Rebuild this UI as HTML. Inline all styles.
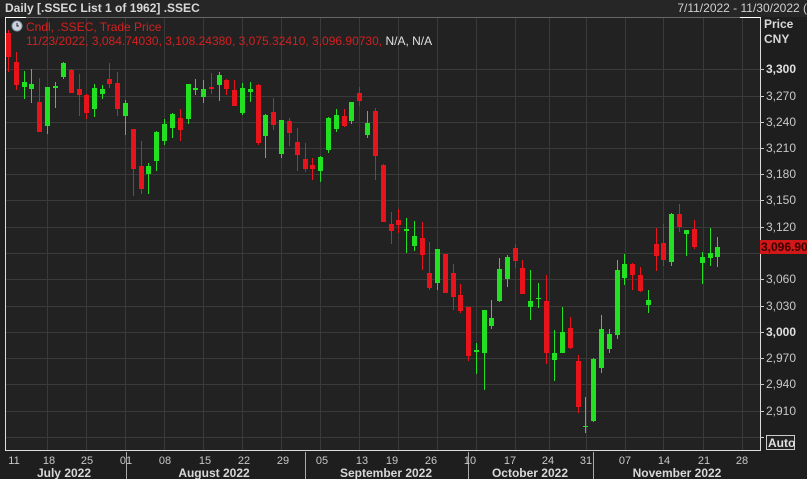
<!DOCTYPE html>
<html><head><meta charset="utf-8"><style>
html,body{margin:0;padding:0;background:#1e1e1e;width:807px;height:479px;overflow:hidden;font-family:"Liberation Sans",sans-serif}
svg{display:block}
text{font-family:"Liberation Sans",sans-serif}
</style></head><body>
<svg width="807" height="479" viewBox="0 0 807 479" xmlns="http://www.w3.org/2000/svg">
<rect x="0" y="0" width="807" height="479" fill="#1e1e1e"/>
<rect x="0" y="0" width="807" height="17" fill="#262626"/>
<rect x="5" y="17" width="755" height="433" fill="#222222"/>
<g stroke="#3a3a3a" stroke-width="1">
<path d="M5 69.5H760M5 96.5H760M5 122.5H760M5 148.5H760M5 174.5H760M5 200.5H760M5 227.5H760M5 253.5H760M5 279.5H760M5 306.5H760M5 332.5H760M5 358.5H760M5 384.5H760M5 411.5H760M5 437.5H760"/>
<path d="M47.5 17V450M86.5 17V450M125.5 17V450M164.5 17V450M203.5 17V450M242.5 17V450M281.5 17V450M320.5 17V450M359.5 17V450M398.5 17V450M437.5 17V450M476.5 17V450M515.5 17V450M549.5 17V450M586.5 17V450M625.5 17V450M663.5 17V450M703.5 17V450M742.5 17V450"/>
</g>
<path d="M5.5 17.5H760.5" fill="none" stroke="#666" stroke-width="1"/>
<path d="M5.5 17V450.5H760.5V17" fill="none" stroke="#ddd" stroke-width="1"/>
<path d="M5.5 17.5H26M740 17.5H760.5" fill="none" stroke="#fff" stroke-width="1"/>
<g stroke="#22e022" stroke-width="1" fill="#22e022">
<path fill="none" d="M24.5 71V99M31.5 69V103M47.5 87V134M55.5 82V108M63.5 62V79M94.5 84V117M102.5 85V99M125.5 100V135M148.5 163V194M156.5 131V171M164.5 119V145M172.5 113V138M188.5 84V124M195.5 79V95M203.5 80V103M219.5 72V101M242.5 83V115M250.5 82V102M265.5 114V158M281.5 120V158M320.5 156V182M328.5 117V153M336.5 109V132M351.5 102V124M367.5 111V138M406.5 218V253M414.5 221V251M437.5 249V290M476.5 343V374M484.5 310V390M491.5 300V329M499.5 258V302M507.5 255V287M530.5 270V320M538.5 283V308M554.5 330V381M562.5 307V352M585.5 397V433M593.5 358V422M601.5 315V373M609.5 329V353M617.5 260V339M624.5 254V285M648.5 290V313M671.5 213V266M686.5 230V256M702.5 252V284M710.5 228V266M717.5 237V267"/>
<g stroke="none">
<rect x="22" y="82" width="5" height="5"/><rect x="29" y="84" width="5" height="5"/><rect x="45" y="87" width="5" height="39"/><rect x="53" y="86" width="5" height="2"/><rect x="61" y="63" width="5" height="14"/><rect x="92" y="88" width="5" height="21"/><rect x="100" y="89" width="5" height="5"/><rect x="123" y="103" width="5" height="13"/><rect x="146" y="166" width="5" height="8"/><rect x="154" y="132" width="5" height="29"/><rect x="162" y="124" width="5" height="17"/><rect x="170" y="114" width="5" height="14"/><rect x="186" y="84" width="5" height="35"/><rect x="193" y="88" width="5" height="2"/><rect x="201" y="89" width="5" height="8"/><rect x="217" y="75" width="5" height="10"/><rect x="240" y="88" width="5" height="25"/><rect x="248" y="89" width="5" height="3"/><rect x="263" y="115" width="5" height="21"/><rect x="279" y="120" width="5" height="34"/><rect x="318" y="157" width="5" height="14"/><rect x="326" y="118" width="5" height="32"/><rect x="334" y="115" width="5" height="14"/><rect x="349" y="102" width="5" height="19"/><rect x="365" y="123" width="5" height="12"/><rect x="404" y="229" width="5" height="2"/><rect x="412" y="236" width="5" height="10"/><rect x="435" y="249" width="5" height="34"/><rect x="474" y="350" width="5" height="2"/><rect x="482" y="310" width="5" height="43"/><rect x="489" y="318" width="5" height="8"/><rect x="497" y="269" width="5" height="32"/><rect x="505" y="257" width="5" height="22"/><rect x="528" y="301" width="5" height="6"/><rect x="536" y="298" width="5" height="1"/><rect x="552" y="353" width="5" height="7"/><rect x="560" y="332" width="5" height="21"/><rect x="583" y="426" width="5" height="1"/><rect x="591" y="359" width="5" height="62"/><rect x="599" y="329" width="5" height="39"/><rect x="607" y="334" width="5" height="15"/><rect x="615" y="270" width="5" height="65"/><rect x="622" y="264" width="5" height="14"/><rect x="646" y="300" width="5" height="5"/><rect x="669" y="214" width="5" height="48"/><rect x="684" y="230" width="5" height="4"/><rect x="700" y="257" width="5" height="6"/><rect x="708" y="253" width="5" height="5"/><rect x="715" y="247" width="5" height="10"/>
</g></g>
<g stroke="#e8141b" stroke-width="1" fill="#e8141b">
<path fill="none" d="M8.5 30V72M16.5 52V90M39.5 78V132M71.5 69V93M79.5 74V116M86.5 94V119M109.5 63V88M117.5 72V116M133.5 129V196M141.5 141V194M180.5 109V141M211.5 73V94M226.5 79V95M234.5 80V106M258.5 84V145M273.5 98V130M289.5 118V146M297.5 128V171M305.5 143V172M312.5 158V180M344.5 109V127M359.5 87V106M375.5 108V180M383.5 164V222M391.5 212V244M398.5 209V233M422.5 222V270M429.5 242V290M445.5 254V293M453.5 264V310M460.5 284V313M468.5 307V361M515.5 244V268M522.5 260V294M546.5 275V364M570.5 317V349M578.5 355V413M632.5 263V290M640.5 267V292M656.5 228V271M663.5 224V266M679.5 204V232M694.5 220V249"/>
<g stroke="none">
<rect x="6" y="33" width="5" height="24"/><rect x="14" y="62" width="5" height="23"/><rect x="37" y="102" width="5" height="30"/><rect x="69" y="70" width="5" height="23"/><rect x="77" y="89" width="5" height="6"/><rect x="84" y="95" width="5" height="18"/><rect x="107" y="79" width="5" height="5"/><rect x="115" y="83" width="5" height="26"/><rect x="131" y="129" width="5" height="40"/><rect x="139" y="166" width="5" height="23"/><rect x="178" y="118" width="5" height="12"/><rect x="209" y="87" width="5" height="2"/><rect x="224" y="80" width="5" height="9"/><rect x="232" y="90" width="5" height="16"/><rect x="256" y="85" width="5" height="58"/><rect x="271" y="112" width="5" height="13"/><rect x="287" y="121" width="5" height="12"/><rect x="295" y="142" width="5" height="13"/><rect x="303" y="159" width="5" height="10"/><rect x="310" y="165" width="5" height="4"/><rect x="342" y="116" width="5" height="10"/><rect x="357" y="93" width="5" height="8"/><rect x="373" y="111" width="5" height="45"/><rect x="381" y="165" width="5" height="57"/><rect x="389" y="224" width="5" height="7"/><rect x="396" y="220" width="5" height="5"/><rect x="420" y="238" width="5" height="17"/><rect x="427" y="273" width="5" height="15"/><rect x="443" y="254" width="5" height="39"/><rect x="451" y="273" width="5" height="24"/><rect x="458" y="295" width="5" height="16"/><rect x="466" y="307" width="5" height="49"/><rect x="513" y="248" width="5" height="13"/><rect x="520" y="268" width="5" height="26"/><rect x="544" y="301" width="5" height="52"/><rect x="568" y="328" width="5" height="20"/><rect x="576" y="361" width="5" height="46"/><rect x="630" y="264" width="5" height="11"/><rect x="638" y="275" width="5" height="16"/><rect x="654" y="244" width="5" height="12"/><rect x="661" y="243" width="5" height="17"/><rect x="677" y="214" width="5" height="13"/><rect x="692" y="229" width="5" height="18"/>
</g></g>
<text x="5" y="12" font-size="12" font-weight="bold" fill="#d8d8d8">Daily [.SSEC List 1 of 1962] .SSEC</text>
<text x="807" y="12" font-size="12" fill="#d0d0d0" text-anchor="end">7/11/2022 - 11/30/2022 (</text>
<circle cx="17" cy="26" r="5" fill="#ccd4e0" stroke="#8899aa"/><path d="M17 23V26H19" stroke="#222" fill="none"/>
<text x="26" y="31" font-size="12" fill="#d42020">Cndl, .SSEC, Trade Price</text>
<text x="26" y="45" font-size="12" fill="#d42020">11/23/2022, 3,084.74030, 3,108.24380, 3,075.32410, 3,096.90730, <tspan fill="#e0e0e0">N/A, N/A</tspan></text>
<text x="764" y="28" font-size="12" font-weight="bold" fill="#d8d8d8">Price</text>
<text x="764" y="43" font-size="12" font-weight="bold" fill="#d8d8d8">CNY</text>
<g stroke="#ccc"><path d="M760 69.5H764M760 96.5H764M760 122.5H764M760 148.5H764M760 174.5H764M760 200.5H764M760 227.5H764M760 253.5H764M760 279.5H764M760 306.5H764M760 332.5H764M760 358.5H764M760 384.5H764M760 411.5H764M760 437.5H764"/></g>
<g font-size="12" fill="#c8c8c8">
<text x="766" y="73" font-weight="bold" fill="#e0e0e0">3,300</text>
<text x="766" y="100">3,270</text><text x="766" y="126">3,240</text><text x="766" y="152">3,210</text><text x="766" y="178">3,180</text><text x="766" y="204">3,150</text><text x="766" y="231">3,120</text><text x="766" y="283">3,060</text><text x="766" y="310">3,030</text>
<text x="766" y="336" font-weight="bold" fill="#e0e0e0">3,000</text>
<text x="766" y="362">2,970</text><text x="766" y="388">2,940</text><text x="766" y="415">2,910</text>
</g>
<rect x="760" y="240" width="47" height="14" fill="#d01818"/>
<text x="761" y="251" font-size="12" font-weight="bold" fill="#3a0000">3,096.90</text>
<rect x="766.5" y="435.5" width="28" height="14" fill="#222" stroke="#ccc"/>
<text x="768" y="447" font-size="12" font-weight="bold" fill="#e0e0e0">Auto</text>
<g stroke="#aaa"><path d="M126.5 452V479M305.5 452V479M468.5 452V479M593.5 452V479"/></g>
<g font-size="11" fill="#c8c8c8" text-anchor="middle">
<text x="14" y="464">11</text><text x="49" y="464">18</text><text x="87" y="464">25</text><text x="126" y="464">01</text><text x="165" y="464">08</text><text x="205" y="464">15</text><text x="244" y="464">22</text><text x="283" y="464">29</text><text x="322" y="464">05</text><text x="362" y="464">13</text><text x="392" y="464">19</text><text x="431" y="464">26</text><text x="470" y="464">10</text><text x="510" y="464">17</text><text x="548" y="464">24</text><text x="586" y="464">31</text><text x="625" y="464">07</text><text x="664" y="464">14</text><text x="704" y="464">21</text><text x="742" y="464">28</text>
</g>
<g font-size="12" font-weight="bold" fill="#d8d8d8" text-anchor="middle">
<text x="64" y="477">July 2022</text><text x="214" y="477">August 2022</text><text x="386" y="477">September 2022</text><text x="530" y="477">October 2022</text><text x="677" y="477">November 2022</text>
</g>
</svg>
</body></html>
